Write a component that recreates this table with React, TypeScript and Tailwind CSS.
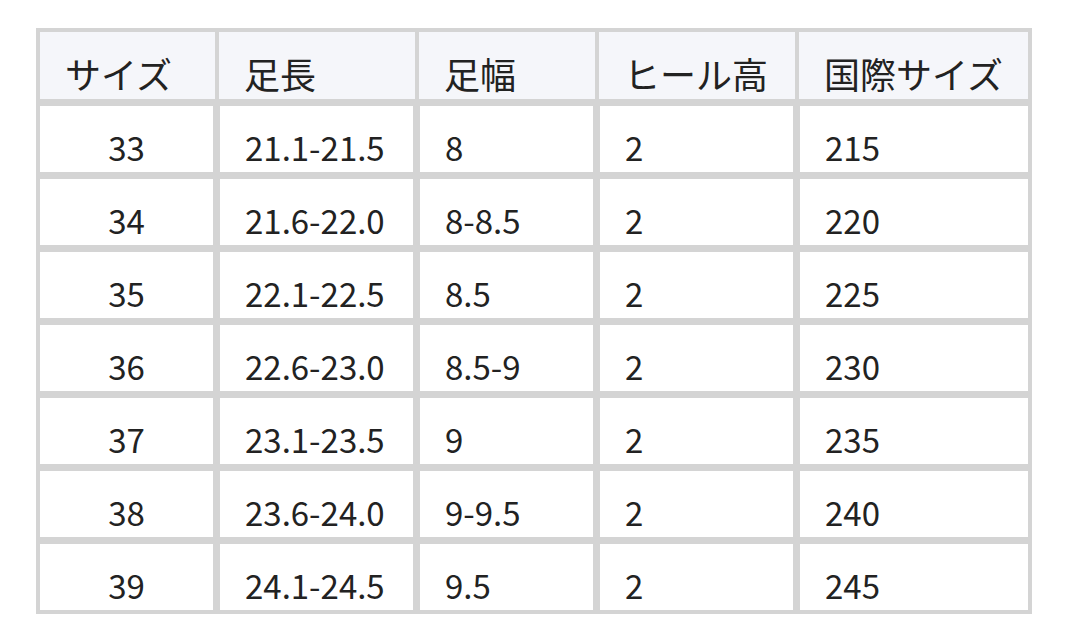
import React from "react";

const headers = ["サイズ", "足長", "足幅", "ヒール高", "国際サイズ"];

const rows = [
  ["33", "21.1-21.5", "8", "2", "215"],
  ["34", "21.6-22.0", "8-8.5", "2", "220"],
  ["35", "22.1-22.5", "8.5", "2", "225"],
  ["36", "22.6-23.0", "8.5-9", "2", "230"],
  ["37", "23.1-23.5", "9", "2", "235"],
  ["38", "23.6-24.0", "9-9.5", "2", "240"],
  ["39", "24.1-24.5", "9.5", "2", "245"],
];

export default function App() {
  return (
    <div
      className="w-[1067px] h-[641px] bg-white pt-[28px] pl-[36px] text-[#222] text-[36px] leading-[40px]"
      style={{ fontFamily: '"Noto Sans CJK JP", "Noto Sans", sans-serif' }}
    >
      <div className="w-[996px] bg-[#d4d4d4] p-[4px] flex flex-col gap-[7px]">
        <div className="grid grid-cols-[175px_196px_176px_196px_229px] gap-[4px]">
          {headers.map((h) => (
            <div
              key={h}
              className="h-[67px] bg-[#f5f6fa] flex items-end pl-[25px] pb-[6px]"
            >
              {h}
            </div>
          ))}
        </div>
        {rows.map((r) => (
          <div
            key={r[0]}
            className="grid grid-cols-[173px_193px_173px_193px_228px] gap-[7px]"
          >
            {r.map((c, i) => (
              <div
                key={i}
                className={
                  i === 0
                    ? "h-[66px] bg-white flex items-end justify-center pb-[5px] text-[33px]"
                    : "h-[66px] bg-white flex items-end pl-[25px] pb-[5px] text-[33px]"
                }
              >
                {c}
              </div>
            ))}
          </div>
        ))}
      </div>
    </div>
  );
}
